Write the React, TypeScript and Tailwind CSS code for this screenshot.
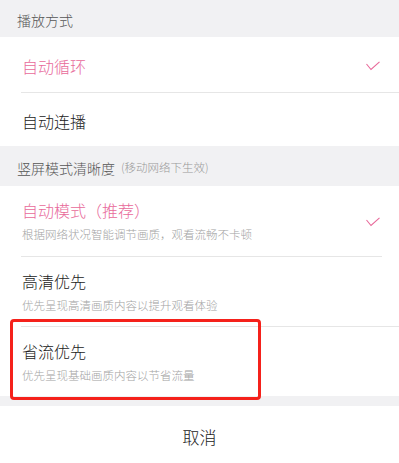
const font = { fontFamily: '"Noto Sans CJK SC", "Noto Sans", sans-serif' };

function Check() {
  return (
    <svg width="14" height="10" viewBox="0 0 14 10" className="shrink-0">
      <polyline points="0.5,3 5,8.5 13.5,0.8" fill="none" stroke="#e8699a" strokeWidth="1.1" />
    </svg>
  );
}

export default function App() {
  return (
    <div className="w-[399px] h-[463px] bg-white flex flex-col relative overflow-hidden font-light" style={font}>
      <div className="h-[37px] bg-[#f1f1f3] flex items-center pl-[17px] pt-[3px]">
        <span className="text-[14px] text-[#555] leading-none">播放方式</span>
      </div>

      <div className="bg-white">
        <div className="h-[55px] flex items-center justify-between pl-[22px] pr-[19px] pt-[2px]">
          <span className="text-[16px] text-[#e8699a] leading-none">自动循环</span>
          <Check />
        </div>
        <div className="ml-[21px] h-px bg-[#e6e6e6]" />
        <div className="h-[53px] flex items-center pl-[22px] pt-[2px]">
          <span className="text-[16px] text-[#222] leading-none">自动连播</span>
        </div>
      </div>

      <div className="h-[40px] bg-[#f1f1f3] flex items-center pl-[17px] pt-[4px]">
        <span className="text-[14px] text-[#555] leading-none">竖屏模式清晰度</span>
        <span className="ml-[6px] text-[11.5px] text-[#999] leading-none">(移动网络下生效)</span>
      </div>

      <div className="bg-white">
        <div className="h-[70px] flex items-center justify-between pl-[22px] pr-[19px]">
          <div className="flex flex-col gap-[11px] pt-[1px]">
            <span className="text-[16px] text-[#e8699a] leading-none">自动模式（推荐）</span>
            <span className="text-[11.5px] text-[#a3a3a3] leading-none">根据网络状况智能调节画质，观看流畅不卡顿</span>
          </div>
          <div className="pt-[2px]">
            <Check />
          </div>
        </div>
        <div className="ml-[21px] mr-[17px] h-px bg-[#e6e6e6]" />
        <div className="h-[69px] flex flex-col justify-center gap-[11px] pl-[22px] pt-[1px]">
          <span className="text-[16px] text-[#222] leading-none">高清优先</span>
          <span className="text-[11.5px] text-[#a3a3a3] leading-none">优先呈现高清画质内容以提升观看体验</span>
        </div>
        <div className="ml-[21px] h-px bg-[#e6e6e6]" />
        <div className="h-[69px] flex flex-col justify-center gap-[11px] pl-[22px] pt-[1px]">
          <span className="text-[16px] text-[#222] leading-none">省流优先</span>
          <span className="text-[11.5px] text-[#a3a3a3] leading-none">优先呈现基础画质内容以节省流量</span>
        </div>
      </div>

      <div className="h-[10px] bg-[#f1f1f3]" />

      <div className="flex-1 flex items-center justify-center pt-[3px]">
        <span className="text-[17px] text-[#222] leading-none">取消</span>
      </div>

      <div className="absolute left-[10px] top-[319px] w-[251px] h-[81px] border-[3px] border-[#f5211b] rounded-[4px]" />
    </div>
  );
}
